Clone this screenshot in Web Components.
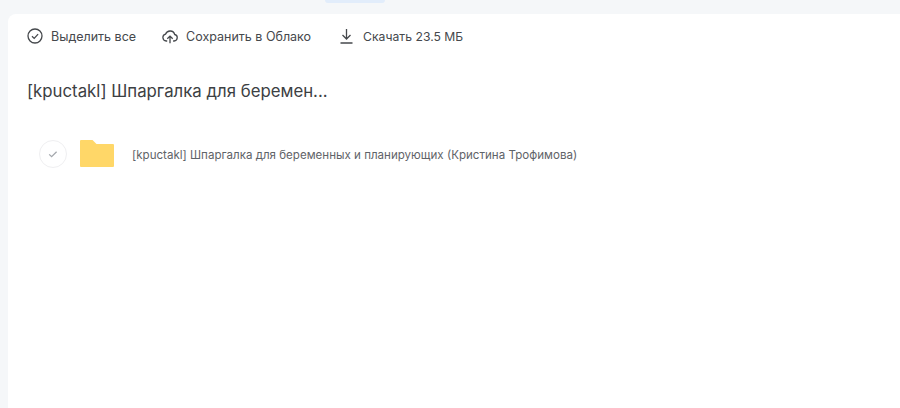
<!doctype html>
<html>
<head>
<meta charset="utf-8">
<style>
html, body { margin: 0; height: 100%; }
body { background: #f5f7f9; overflow: hidden; font-family: Inter, Roboto, "Liberation Sans", sans-serif; }
</style>
</head>
<body>
<disk-page>
  <tool-bar slot="toolbar">
    <tool-button icon="check">Выделить все</tool-button>
    <tool-button icon="cloud">Сохранить в Облако</tool-button>
    <tool-button icon="download">Скачать 23.5 МБ</tool-button>
  </tool-bar>
  <folder-title slot="title">[kpuctakl] Шпаргалка для беремен...</folder-title>
  <file-row>[kpuctakl] Шпаргалка для беременных и планирующих (Кристина Трофимова)</file-row>
</disk-page>

<script>
const pageTemplate = document.createElement('template');
pageTemplate.innerHTML = `
<style>
:host {
  display: flex;
  flex-direction: column;
  height: 408px;
  box-sizing: border-box;
}

.top {
  height: 14px;
  flex: none;
  display: flex;
  justify-content: center;
}

.pill {
  width: 60px;
  height: 3px;
  margin-left: -190px;
  background: #e2edfb;
  border-radius: 0 0 10px 10px;
}

.panel {
  flex: 1;
  margin-left: 8px;
  background: #fff;
  border-top-left-radius: 8px;
  padding: 0 0 0 19px;
}
</style>
<div class="top"><div class="pill"></div></div>
<div class="panel">
  <slot name="toolbar"></slot>
  <slot name="title"></slot>
  <slot></slot>
</div>
`;
class DiskPage extends HTMLElement {
  constructor() {
    super();
    this.attachShadow({ mode: "open" });
    this.shadowRoot.appendChild(pageTemplate.content.cloneNode(true));
  }
}
window.customElements.define('disk-page', DiskPage);

const toolbarTemplate = document.createElement('template');
toolbarTemplate.innerHTML = `
<style>
:host {
  display: flex;
  align-items: center;
  gap: 26px;
  height: 44px;
}
</style>
<slot></slot>
`;
class ToolBar extends HTMLElement {
  constructor() {
    super();
    this.attachShadow({ mode: "open" });
    this.shadowRoot.appendChild(toolbarTemplate.content.cloneNode(true));
  }
}
window.customElements.define('tool-bar', ToolBar);

const icons = {
  check: `<circle cx="8" cy="8" r="7"/><path d="M5 8.2l2.2 2.2 3.9-4.3"/>`,
  cloud: `<path d="M5.2 13H4.2a3.5 3.5 0 0 1-.6-6.9 4.8 4.8 0 0 1 9.1.4 3.3 3.3 0 0 1-.6 6.5h-1"/><path d="M8 15.2V8.2M5.3 10.8L8 8.1l2.7 2.7"/>`,
  download: `<path d="M8.5 1v10M4.5 7l4 4 4-4M2.5 15h12"/>`
};

const buttonTemplate = document.createElement('template');
buttonTemplate.innerHTML = `
<style>
:host {
  display: flex;
  align-items: center;
  gap: 8px;
  font-size: 12.5px;
  color: #45484c;
  white-space: nowrap;
}

:host([icon="download"]) {
  gap: 9px;
  margin-left: 1px;
  font-size: 12.2px;
}

svg {
  width: 16px;
  height: 16px;
  fill: none;
  stroke: #45484c;
  stroke-width: 1.3;
}
</style>
<svg viewBox="0 0 16 16"></svg>
<slot></slot>
`;
class ToolButton extends HTMLElement {
  constructor() {
    super();
    this.attachShadow({ mode: "open" });
    this.shadowRoot.appendChild(buttonTemplate.content.cloneNode(true));
  }

  connectedCallback() {
    this.shadowRoot.querySelector('svg').innerHTML = icons[this.getAttribute('icon')];
  }
}
window.customElements.define('tool-button', ToolButton);

const titleTemplate = document.createElement('template');
titleTemplate.innerHTML = `
<style>
:host {
  display: block;
  margin-top: 22px;
  font-size: 16.8px;
  line-height: 22px;
  font-weight: 400;
  color: #3c4043;
}
</style>
<slot></slot>
`;
class FolderTitle extends HTMLElement {
  constructor() {
    super();
    this.attachShadow({ mode: "open" });
    this.shadowRoot.appendChild(titleTemplate.content.cloneNode(true));
  }
}
window.customElements.define('folder-title', FolderTitle);

const rowTemplate = document.createElement('template');
rowTemplate.innerHTML = `
<style>
:host {
  display: flex;
  align-items: center;
  margin-top: 38px;
  margin-left: 12px;
  height: 28px;
  font-size: 11.57px;
  color: #5f6368;
}

.check {
  width: 28px;
  height: 28px;
  box-sizing: border-box;
  border: 1px solid #efeff1;
  border-radius: 50%;
  display: flex;
  align-items: center;
  justify-content: center;
  flex: none;
}

.check svg {
  width: 10px;
  height: 10px;
  fill: none;
  stroke: #a4a8ad;
  stroke-width: 1.3;
}

.folder {
  width: 34px;
  height: 27px;
  margin-left: 13px;
  margin-right: 18px;
  flex: none;
  align-self: flex-start;
  fill: #ffd768;
}

.label {
  padding-top: 1px;
}
</style>
<div class="check"><svg viewBox="0 0 10 10"><path d="M1.2 5.4l2.4 2.3 5-5"/></svg></div>
<svg class="folder" viewBox="0 0 34 27"><path d="M1 0h11.5l4 4H33a1 1 0 0 1 1 1v21a1 1 0 0 1-1 1H1a1 1 0 0 1-1-1V1a1 1 0 0 1 1-1z"/></svg>
<div class="label"><slot></slot></div>
`;
class FileRow extends HTMLElement {
  constructor() {
    super();
    this.attachShadow({ mode: "open" });
    this.shadowRoot.appendChild(rowTemplate.content.cloneNode(true));
  }
}
window.customElements.define('file-row', FileRow);
</script>
</body>
</html>
